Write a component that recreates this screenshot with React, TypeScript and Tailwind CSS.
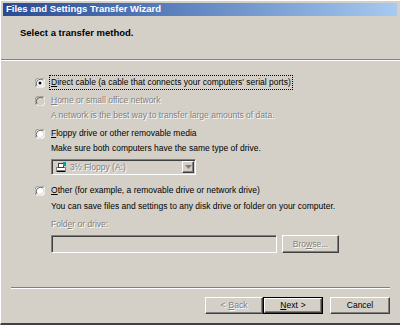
import React from "react";

const FONT = { fontFamily: '"Liberation Sans", Arial, sans-serif' };

function Radio({ checked = false, disabled = false }: { checked?: boolean; disabled?: boolean }) {
  return (
    <svg width="10" height="10" viewBox="0 0 12 12" className="shrink-0">
      <circle cx="6" cy="6" r="5.5" fill={disabled ? "#d4d0c8" : "#ffffff"} />
      <path d="M1.5 10.5 A6 6 0 0 1 10.5 1.5" fill="none" stroke="#808080" strokeWidth="1" />
      <path d="M10.5 1.5 A6 6 0 0 1 1.5 10.5" fill="none" stroke="#ffffff" strokeWidth="1" />
      <path d="M2.5 9.5 A5 5 0 0 1 9.5 2.5" fill="none" stroke="#404040" strokeWidth="1" />
      <path d="M9.5 2.5 A5 5 0 0 1 2.5 9.5" fill="none" stroke="#d4d0c8" strokeWidth="1" />
      {checked && <circle cx="6" cy="6" r="1.8" fill="#000000" />}
    </svg>
  );
}

function Btn({ children, def = false, disabled = false }: { children: React.ReactNode; def?: boolean; disabled?: boolean }) {
  return (
    <div className={"h-[17px] " + (def ? "border border-black" : "")}>
      <div
        className={
          "h-full flex items-center justify-center border border-t-white border-l-white border-b-[#404040] border-r-[#404040] shadow-[inset_-1px_-1px_#808080] " +
          (disabled ? "text-[#808080] [text-shadow:1px_1px_0_#fff]" : "text-black")
        }
      >
        {children}
      </div>
    </div>
  );
}

function Floppy() {
  return (
    <svg width="12" height="11" viewBox="0 0 12 11" className="shrink-0">
      <rect x="1" y="5" width="10" height="5" fill="#808080" />
      <rect x="2" y="6" width="8" height="2" fill="#ffffff" />
      <rect x="3" y="1" width="6" height="5" fill="#404040" />
      <rect x="4" y="2" width="4" height="3" fill="#ffffff" />
      <rect x="8" y="0" width="3" height="4" fill="#00a0a0" />
      <rect x="2" y="9" width="8" height="1" fill="#000000" />
    </svg>
  );
}

export default function App() {
  const dis = "text-[#808080] [text-shadow:1px_1px_0_#fff]";
  return (
    <div
      className="w-[400px] h-[325px] bg-[#d4d0c8] flex flex-col border-t border-l border-white border-b-2 border-b-[#404040] text-[8.5px] text-black overflow-hidden"
      style={FONT}
    >
      {/* title bar */}
      <div className="mt-[2px] ml-[2px] mr-[3px] h-[13px] flex items-center pl-[3px] bg-gradient-to-r from-[#2a4a94] to-[#a6caf0] text-white font-bold text-[9.5px]">
        Files and Settings Transfer Wizard
      </div>

      {/* header */}
      <div className="h-[43px] pl-[19px] pt-[11px] font-bold text-[9.5px] leading-[11px]">Select a transfer method.</div>
      <div className="h-[2px] border-t border-[#808080] border-b border-b-white" />

      {/* options */}
      <div className="pl-[34px] flex flex-col leading-[15px]">
        <div className="mt-[14px] flex items-center gap-[4px]">
          <Radio checked />
          <span className="border border-dotted border-black px-[1px] leading-[13px]">
            <u>D</u>irect cable (a cable that connects your computers' serial ports)
          </span>
        </div>

        <div className="mt-[3px] flex items-center gap-[6px]">
          <Radio disabled />
          <span className={dis}>
            <u>H</u>ome or small office network
          </span>
        </div>
        <div className={"pl-[16px] " + dis}>A network is the best way to transfer large amounts of data.</div>

        <div className="mt-[3px] flex items-center gap-[6px]">
          <Radio />
          <span>
            <u>F</u>loppy drive or other removable media
          </span>
        </div>
        <div className="pl-[16px]">Make sure both computers have the same type of drive.</div>

        <div className="ml-[16px] mt-[3px] w-[145px] h-[16px] flex border border-t-[#808080] border-l-[#808080] border-b-white border-r-white shadow-[inset_1px_1px_#404040]">
          <div className="flex-1 flex items-center gap-[3px] pl-[3px] pt-[1px]">
            <Floppy />
            <span className={dis}>3½ Floppy (A:)</span>
          </div>
          <div className="w-[12px] my-[1px] mr-[1px] flex items-center justify-center border border-t-white border-l-white border-b-[#404040] border-r-[#404040] shadow-[inset_-1px_-1px_#808080]">
            <svg width="7" height="4" viewBox="0 0 7 4">
              <path d="M0 0 H7 L3.5 4 Z" fill="#808080" />
            </svg>
          </div>
        </div>

        <div className="mt-[8px] flex items-center gap-[6px]">
          <Radio />
          <span>
            <u>O</u>ther (for example, a removable drive or network drive)
          </span>
        </div>
        <div className="pl-[16px] mt-[1px]">You can save files and settings to any disk drive or folder on your computer.</div>
        <div className={"pl-[16px] mt-[3px] " + dis}>
          Fold<u>e</u>r or drive:
        </div>

        <div className="mt-[3px] ml-[16px] flex gap-[5px]">
          <div className="w-[226px] h-[18px] border border-t-[#808080] border-l-[#808080] border-b-white border-r-white shadow-[inset_1px_1px_#404040]" />
          <div className="w-[57px]">
            <div className="h-[18px] flex items-center justify-center border border-t-white border-l-white border-b-[#404040] border-r-[#404040] shadow-[inset_-1px_-1px_#808080] text-[#808080] [text-shadow:1px_1px_0_#fff]">
              Bro<u>w</u>se...
            </div>
          </div>
        </div>
      </div>

      <div className="flex-1" />

      {/* footer */}
      <div className="ml-[10px] mr-[10px] h-[2px] border-t border-[#808080] border-b border-b-white" />
      <div className="mt-[8px] mb-[9px] flex justify-end pr-[10px]">
        <div className="w-[58px]">
          <Btn disabled>
            <span className="mr-[3px]">&lt;</span>
            <u>B</u>ack
          </Btn>
        </div>
        <div className="w-[60px]">
          <Btn def>
            <u>N</u>ext<span className="ml-[3px]">&gt;</span>
          </Btn>
        </div>
        <div className="w-[60px] ml-[7px]">
          <Btn>Cancel</Btn>
        </div>
      </div>
    </div>
  );
}
